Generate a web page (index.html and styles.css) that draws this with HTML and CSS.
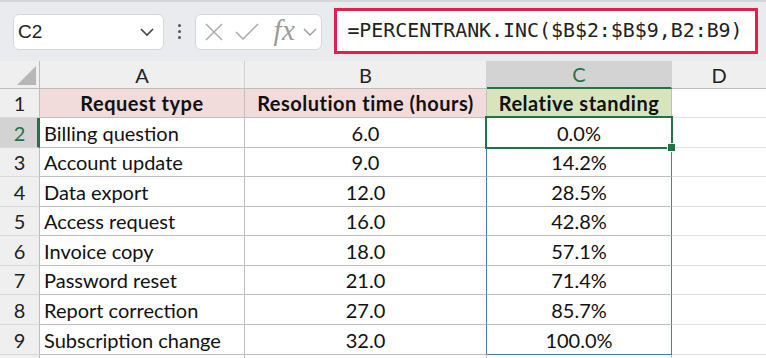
FILE: index.html
```html
<!DOCTYPE html>
<html>
<head>
<meta charset="utf-8">
<link rel="stylesheet" href="styles.css">
</head>
<body>
<div class="app">
  <div class="toolbar">
    <div class="namebox">
      <span class="name">C2</span>
      <svg class="chev" width="16" height="10" viewBox="0 0 16 10"><path d="M2 2 L8 8 L14 2" fill="none" stroke="#444" stroke-width="1.6"/></svg>
    </div>
    <div class="dots"><i></i><i></i><i></i></div>
    <div class="fxbox">
      <svg width="20" height="20" viewBox="0 0 20 20"><path d="M2 2 L18 18 M18 2 L2 18" stroke="#aaa" stroke-width="1.5" fill="none"/></svg>
      <svg width="26" height="20" viewBox="0 0 26 20"><path d="M2 10 L9 17 L24 2" stroke="#aaa" stroke-width="1.5" fill="none"/></svg>
      <span class="fx">fx</span>
      <svg width="14" height="10" viewBox="0 0 14 10"><path d="M1 2 L7 8 L13 2" fill="none" stroke="#999" stroke-width="1.4"/></svg>
    </div>
    <div class="formula">=PERCENTRANK.INC($B$2:$B$9,B2:B9)</div>
  </div>
  <div class="sheet">
    <div class="ch corner"><span class="tri"></span></div>
    <div class="ch">A</div>
    <div class="ch">B</div>
    <div class="ch sel">C</div>
    <div class="ch last">D</div>

    <div class="rh">1</div>
    <div class="c hdr pink">Request type</div>
    <div class="c hdr pink">Resolution time (hours)</div>
    <div class="c hdr green">Relative standing</div>
    <div class="c last"></div>

    <div class="rh rsel">2</div>
    <div class="c">Billing question</div>
    <div class="c ctr bl">6.0</div>
    <div class="c ctr cc active">0.0%</div>
    <div class="c last"></div>

    <div class="rh">3</div>
    <div class="c">Account update</div>
    <div class="c ctr bl">9.0</div>
    <div class="c ctr cc">14.2%</div>
    <div class="c last"></div>

    <div class="rh">4</div>
    <div class="c">Data export</div>
    <div class="c ctr bl">12.0</div>
    <div class="c ctr cc">28.5%</div>
    <div class="c last"></div>

    <div class="rh">5</div>
    <div class="c">Access request</div>
    <div class="c ctr bl">16.0</div>
    <div class="c ctr cc">42.8%</div>
    <div class="c last"></div>

    <div class="rh">6</div>
    <div class="c">Invoice copy</div>
    <div class="c ctr bl">18.0</div>
    <div class="c ctr cc">57.1%</div>
    <div class="c last"></div>

    <div class="rh">7</div>
    <div class="c">Password reset</div>
    <div class="c ctr bl">21.0</div>
    <div class="c ctr cc">71.4%</div>
    <div class="c last"></div>

    <div class="rh">8</div>
    <div class="c">Report correction</div>
    <div class="c ctr bl">27.0</div>
    <div class="c ctr cc">85.7%</div>
    <div class="c last"></div>

    <div class="rh">9</div>
    <div class="c">Subscription change</div>
    <div class="c ctr bl">32.0</div>
    <div class="c ctr cc bb">100.0%</div>
    <div class="c last"></div>

    <div class="rh tail"></div>
    <div class="c tail"></div>
    <div class="c tail"></div>
    <div class="c tail"></div>
    <div class="c tail last"></div>
  </div>
</div>
</body>
</html>
```
FILE: styles.css
```css
* { box-sizing: border-box; }
html, body { margin: 0; padding: 0; background: #fff; }
body { width: 766px; height: 358px; overflow: hidden; }
.app { width: 766px; height: 358px; overflow: hidden; }

.toolbar {
  height: 61px;
  background: #e9ebee;
  border-top: 2px solid #d3d5d8;
  display: flex;
  align-items: center;
  padding: 0 8px 0 13px;
}
.namebox {
  width: 151px; height: 36px;
  background: #fff;
  border: 1px solid #d5d7da;
  border-radius: 6px;
  display: flex; align-items: center; justify-content: space-between;
  padding: 0 8px 0 4px;
  margin-top: 1px;
}
.name { font-family: "Liberation Sans", Arial, sans-serif; font-size: 19px; color: #222; }
.dots { width: 32px; display: flex; flex-direction: column; align-items: center; gap: 3px; }
.dots i { width: 3px; height: 3px; background: #555; border-radius: 50%; display: block; }
.fxbox {
  width: 127px; height: 36px;
  background: #fff;
  border: 1px solid #d5d7da;
  border-radius: 6px;
  display: flex; align-items: center;
  padding: 0 4px 0 8px;
  gap: 10px;
  margin-top: 1px;
}
.fx {
  font-family: "Liberation Serif", "Times New Roman", serif;
  font-style: italic; font-size: 29px; color: #9a9a9a;
  letter-spacing: 0.5px;
  margin-left: 3px; margin-right: -2px;
  line-height: 1;
  padding-bottom: 3px;
}
.formula {
  margin-left: 12px;
  width: 425px; height: 46px;
  border: 3px solid #e0214c;
  background: #fff;
  font-family: "DejaVu Sans Mono", monospace;
  font-size: 19.9px;
  color: #222;
  display: flex; align-items: center;
  padding-left: 10px;
  margin-top: -2px;
}

.sheet {
  display: grid;
  grid-template-columns: 40px 205px 242px 185px 94px;
  grid-template-rows: 28px 29px 30px 29px 30px 29px 30px 29px 30px 30px 10px;
  font-family: Lato, "Noto Sans", sans-serif;
  font-size: 20px;
  color: #111;
}
.ch {
  background: #efefef;
  border-right: 1px solid #d2d2d2;
  border-bottom: 1px solid #bdbdbd;
  display: flex; align-items: center; justify-content: center;
  color: #222;
}
.ch.corner { position: relative; border-right: 1px solid #bdbdbd; }
.tri {
  position: absolute; right: 3px; bottom: 3px;
  width: 0; height: 0;
  border-left: 19px solid transparent;
  border-bottom: 19px solid #b7b7b7;
}
.ch.sel { background: #d3d3d3; color: #217346; border-bottom: 2px solid #217346; }
.ch.last { border-right: none; }

.rh {
  background: #efefef;
  border-right: 1px solid #bdbdbd;
  border-bottom: 1px solid #d8d8d8;
  display: flex; align-items: center; justify-content: center;
  color: #222;
}
.rh.rsel { background: #d3d3d3; color: #217346; border-right: 3px solid #217346; padding-left: 2px; }
.c {
  border-right: 1px solid #bfbfbf;
  border-bottom: 1px solid #bfbfbf;
  display: flex; align-items: center;
  padding-left: 4px;
  white-space: nowrap;
  position: relative;
}
.ctr { justify-content: center; padding-left: 0; }
.hdr { font-weight: 700; justify-content: center; padding-left: 0; letter-spacing: 0.5px; }
.pink { background: #f2dcdb; }
.green { background: #d8e4bc; }
.c.last { border-right: none; border-bottom: 1px solid #e2e2e2; }
.c.bl { border-right-color: #4a78c2; }
.c.cc { border-right-color: #4a78c2; }
.c.bb { border-bottom-color: #4a78c2; }
.c.active::after {
  content: "";
  position: absolute;
  left: -2px; top: -2px; right: -2px; bottom: -2px;
  border: 2px solid #217346;
}
.c.active::before {
  content: "";
  position: absolute;
  right: -5px; bottom: -5px;
  width: 7px; height: 7px;
  background: #217346;
  border: 1px solid #fff;
  z-index: 2;
}
.tail { border-bottom: none !important; }
.c.last.tail { border-bottom: none; }
```
